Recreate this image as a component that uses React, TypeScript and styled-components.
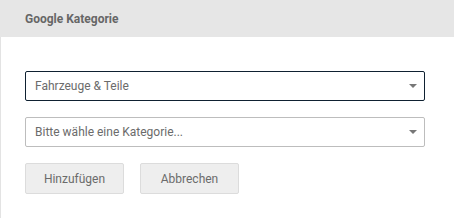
import React, {useState} from 'react';
import styled, {createGlobalStyle} from 'styled-components';

const GlobalStyle = createGlobalStyle`
    html, body {
        margin: 0;
        padding: 0;
        background: #ffffff;
        font-family: Roboto, "Liberation Sans", Arial, sans-serif;
    }
`;

const categories = ["Fahrzeuge & Teile", "Bekleidung & Accessoires", "Elektronik", "Möbel"];

const App = () => {
    const [main, setMain] = useState(categories[0]);
    const [sub, setSub] = useState("");

    return (
        <>
            <GlobalStyle />
            <Panel>
                <Header>Google Kategorie</Header>
                <Body>
                    <SelectWrap>
                        <Select value={main} focused onChange={(e) => setMain(e.target.value)}>
                            {categories.map((c) => <option key={c} value={c}>{c}</option>)}
                        </Select>
                        <Caret />
                    </SelectWrap>
                    <SelectWrap>
                        <Select value={sub} onChange={(e) => setSub(e.target.value)}>
                            <option value="">Bitte wähle eine Kategorie...</option>
                        </Select>
                        <Caret />
                    </SelectWrap>
                    <ButtonRow>
                        <Button>Hinzufügen</Button>
                        <Button>Abbrechen</Button>
                    </ButtonRow>
                </Body>
            </Panel>
        </>
    );
};

export default App;

const Panel = styled.div`
    width: 454px;
    height: 218px;
    background: #ffffff;
    border-left: 1px solid #e3e3e3;
    box-sizing: border-box;
`;

const Header = styled.div`
    height: 37px;
    margin-left: -1px;
    padding-left: 25px;
    display: flex;
    align-items: center;
    background: #e6e6e6;
    color: #666666;
    font-size: 12px;
    font-weight: 700;
`;

const Body = styled.div`
    padding: 34px 0 0 24px;
    display: flex;
    flex-direction: column;
    gap: 16px;
`;

const SelectWrap = styled.div`
    position: relative;
    width: 400px;
`;

const Select = styled.select<{focused?: boolean}>`
    appearance: none;
    width: 100%;
    height: 30px;
    box-sizing: border-box;
    padding: 0 24px 0 9px;
    border: 1px solid ${props => props.focused ? '#0f2131' : '#bdbdbd'};
    border-radius: 2px;
    background: #ffffff;
    color: #6b6b6b;
    font-family: Roboto, "Liberation Sans", Arial, sans-serif;
    font-size: 12px;
    outline: none;
`;

const Caret = styled.span`
    position: absolute;
    right: 8px;
    top: 13px;
    width: 0;
    height: 0;
    border-left: 4px solid transparent;
    border-right: 4px solid transparent;
    border-top: 4px solid #777777;
    pointer-events: none;
`;

const ButtonRow = styled.div`
    display: flex;
    gap: 16px;
`;

const Button = styled.button`
    width: 99px;
    height: 31px;
    box-sizing: border-box;
    border: 1px solid #dcdcdc;
    border-radius: 2px;
    background: #eeeeee;
    color: #6b6b6b;
    font-family: Roboto, "Liberation Sans", Arial, sans-serif;
    font-size: 12px;
    cursor: pointer;
`;
